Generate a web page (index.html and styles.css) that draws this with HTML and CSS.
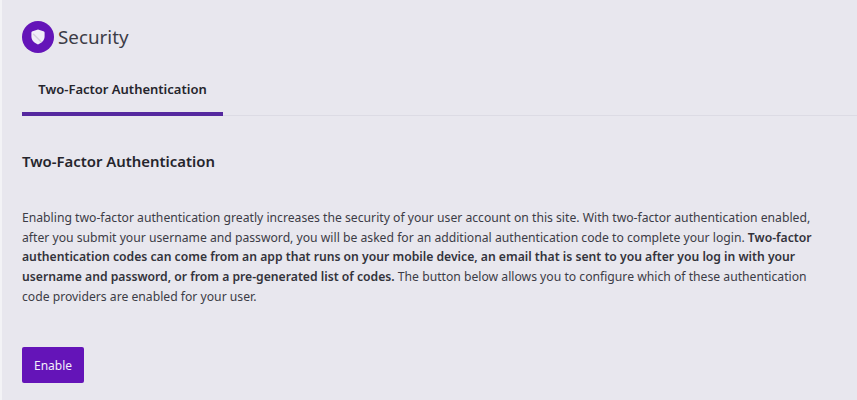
FILE: index.html
```html
<!DOCTYPE html>
<html lang="en">
<head>
  <meta charset="UTF-8">
  <title>Security</title>
  <link rel="stylesheet" href="styles.css">
</head>
<body>
  <main class="page">
    <header class="page-head">
      <span class="page-icon">
        <svg viewBox="0 0 16 16" width="16" height="16">
          <path d="M8 .6 L13.4 2.2 C14.2 2.4 14.6 2.9 14.6 3.6 V7.6 C14.6 11.2 12 14 8 15.4 C4 14 1.4 11.2 1.4 7.6 V3.6 C1.4 2.9 1.8 2.4 2.6 2.2 Z" fill="#f1eef8"/>
          <path d="M3.6 4.2 L11.8 12.4 L10.8 13.4 L2.8 5.4 Z" fill="#d4d0dc"/>
        </svg>
      </span>
      <h1>Security</h1>
    </header>

    <nav class="tabs">
      <a href="#" class="tab active">Two-Factor Authentication</a>
    </nav>

    <h2>Two-Factor Authentication</h2>

    <p class="intro">Enabling two-factor authentication greatly increases the security of your user account on this site. With two-factor authentication enabled, after you submit your username and password, you will be asked for an additional authentication code to complete your login. <strong>Two-factor authentication codes can come from an app that runs on your mobile device, an email that is sent to you after you log in with your username and password, or from a pre-generated list of codes.</strong> The button below allows you to configure which of these authentication code providers are enabled for your user.</p>

    <button type="button" class="btn">Enable</button>
  </main>
</body>
</html>
```

FILE: styles.css
```css
html, body { margin:0; padding:0; height:100%; overflow:hidden; }
body { background:#f3f3f6; font-family:"Noto Sans", "Open Sans", sans-serif; color:#2b2b33; }
.page { margin-left:2px; height:100%; background:#e8e7ee; padding:21px 0 0 20px; box-sizing:border-box; }
.page-head { display:flex; align-items:center; gap:4px; height:32px; }
.page-icon { width:32px; height:32px; border-radius:50%; background:#6414b8; display:flex; align-items:center; justify-content:center; }
h1 { margin:0; font-size:18.8px; font-weight:400; color:#3c3c46; }
.tabs { margin-top:14px; border-bottom:1px solid #dcdbe4; display:flex; height:49px; box-sizing:border-box; }
.tab { width:201px; box-sizing:border-box; height:49px; line-height:44px; text-align:center; font-size:13px; font-weight:600; color:#25252c; text-decoration:none; border-bottom:4px solid #55289f; }
h2 { margin:35px 0 0; font-size:14.9px; line-height:20px; font-weight:600; color:#25252c; }
.intro { margin:37px 0 0; font-size:12.18px; line-height:19.7px; color:#3c3c46; width:800px; }
.intro strong { font-weight:600; color:#33333b; }
.btn { display:block; margin-top:40px; width:62px; height:36px; border:none; border-radius:2px; background:#6414b8; color:#f3eefb; font:400 12px/38px "Noto Sans", sans-serif; padding:0; }
```
